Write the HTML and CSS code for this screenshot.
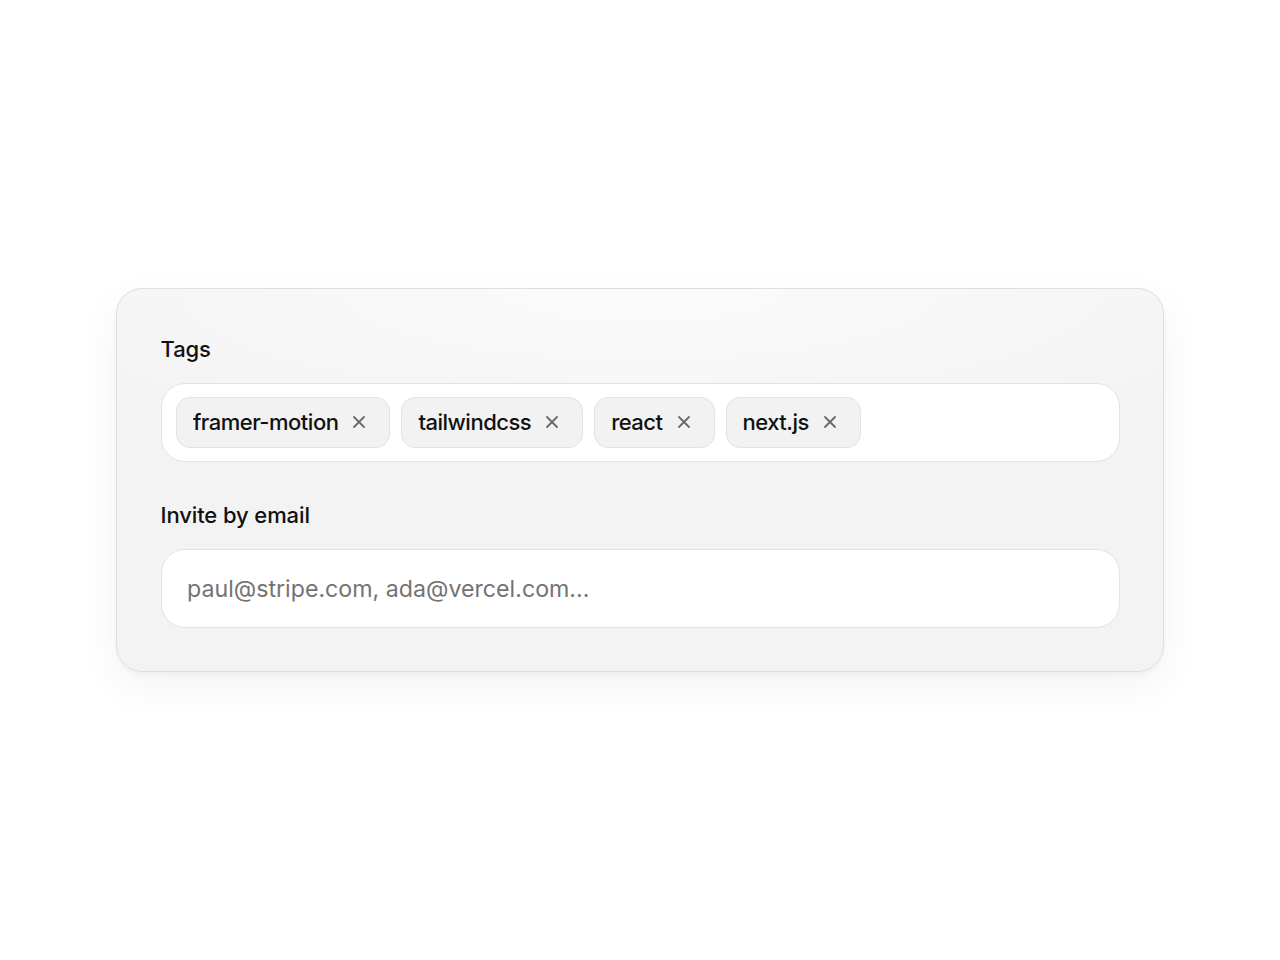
FILE: index.html
```html
<!DOCTYPE html>
<html lang="en">
<head>
<meta charset="utf-8">
<title>Tags</title>
<link rel="stylesheet" href="styles.css">
</head>
<body>
<main class="page">
  <section class="card">
    <div class="field">
      <label class="label">Tags</label>
      <div class="tag-input">
        <span class="chip">framer-motion<button class="chip-x" aria-label="Remove"><svg viewBox="0 0 14 14" width="14" height="14"><path d="M2 2L12 12M12 2L2 12"/></svg></button></span>
        <span class="chip">tailwindcss<button class="chip-x" aria-label="Remove"><svg viewBox="0 0 14 14" width="14" height="14"><path d="M2 2L12 12M12 2L2 12"/></svg></button></span>
        <span class="chip">react<button class="chip-x" aria-label="Remove"><svg viewBox="0 0 14 14" width="14" height="14"><path d="M2 2L12 12M12 2L2 12"/></svg></button></span>
        <span class="chip">next.js<button class="chip-x" aria-label="Remove"><svg viewBox="0 0 14 14" width="14" height="14"><path d="M2 2L12 12M12 2L2 12"/></svg></button></span>
      </div>
    </div>
    <div class="field">
      <label class="label" for="email">Invite by email</label>
      <input id="email" class="text-input" type="text" placeholder="paul@stripe.com, ada@vercel.com...">
    </div>
  </section>
</main>
</body>
</html>
```

FILE: styles.css
```css
* { box-sizing: border-box; }
html, body { margin: 0; padding: 0; background: #ffffff; }
body {
  font-family: Inter, "Noto Sans", "Liberation Sans", sans-serif;
  color: #111111;
}
.page {
  min-height: 960px;
  display: flex;
  align-items: center;
  justify-content: center;
}
.card {
  width: 1048px;
  padding: 45.5px 43.5px 43px;
  border: 1.5px solid #dedede;
  border-radius: 26px;
  background: radial-gradient(ellipse 70% 45% at 50% 0%, #fbfbfb 0%, #f3f3f3 100%);
  box-shadow: 0 14px 40px rgba(0,0,0,0.05), 0 2px 4px rgba(0,0,0,0.04);
  display: flex;
  flex-direction: column;
  gap: 39.5px;
}
.field {
  display: flex;
  flex-direction: column;
  gap: 20px;
}
.label {
  font-size: 22px;
  line-height: 28px;
  font-weight: 500;
  color: #111111;
  letter-spacing: -0.1px;
}
.tag-input {
  height: 79px;
  background: #ffffff;
  border: 1.5px solid #e3e3e3;
  border-radius: 24px;
  padding: 0 14.5px;
  display: flex;
  align-items: center;
  gap: 11px;
}
.chip {
  height: 51px;
  display: inline-flex;
  align-items: center;
  gap: 14px;
  padding: 0 23px 0 16px;
  background: #f2f2f2;
  border: 1.5px solid #e2e2e2;
  border-radius: 14px;
  font-size: 22px;
  font-weight: 500;
  color: #111111;
  letter-spacing: -0.5px;
}
.chip-x {
  display: inline-flex;
  padding: 0;
  margin: 0;
  border: 0;
  background: none;
  color: #6a6a6a;
}
.chip-x svg {
  display: block;
  fill: none;
  stroke: currentColor;
  stroke-width: 1.8;
  stroke-linecap: round;
}
.text-input {
  height: 79px;
  width: 100%;
  background: #ffffff;
  border: 1.5px solid #e3e3e3;
  border-radius: 24px;
  padding: 0 25.5px;
  font-family: inherit;
  font-size: 23.2px;
  color: #111111;
  outline: none;
}
.text-input::placeholder {
  color: #737373;
  opacity: 1;
}
```
